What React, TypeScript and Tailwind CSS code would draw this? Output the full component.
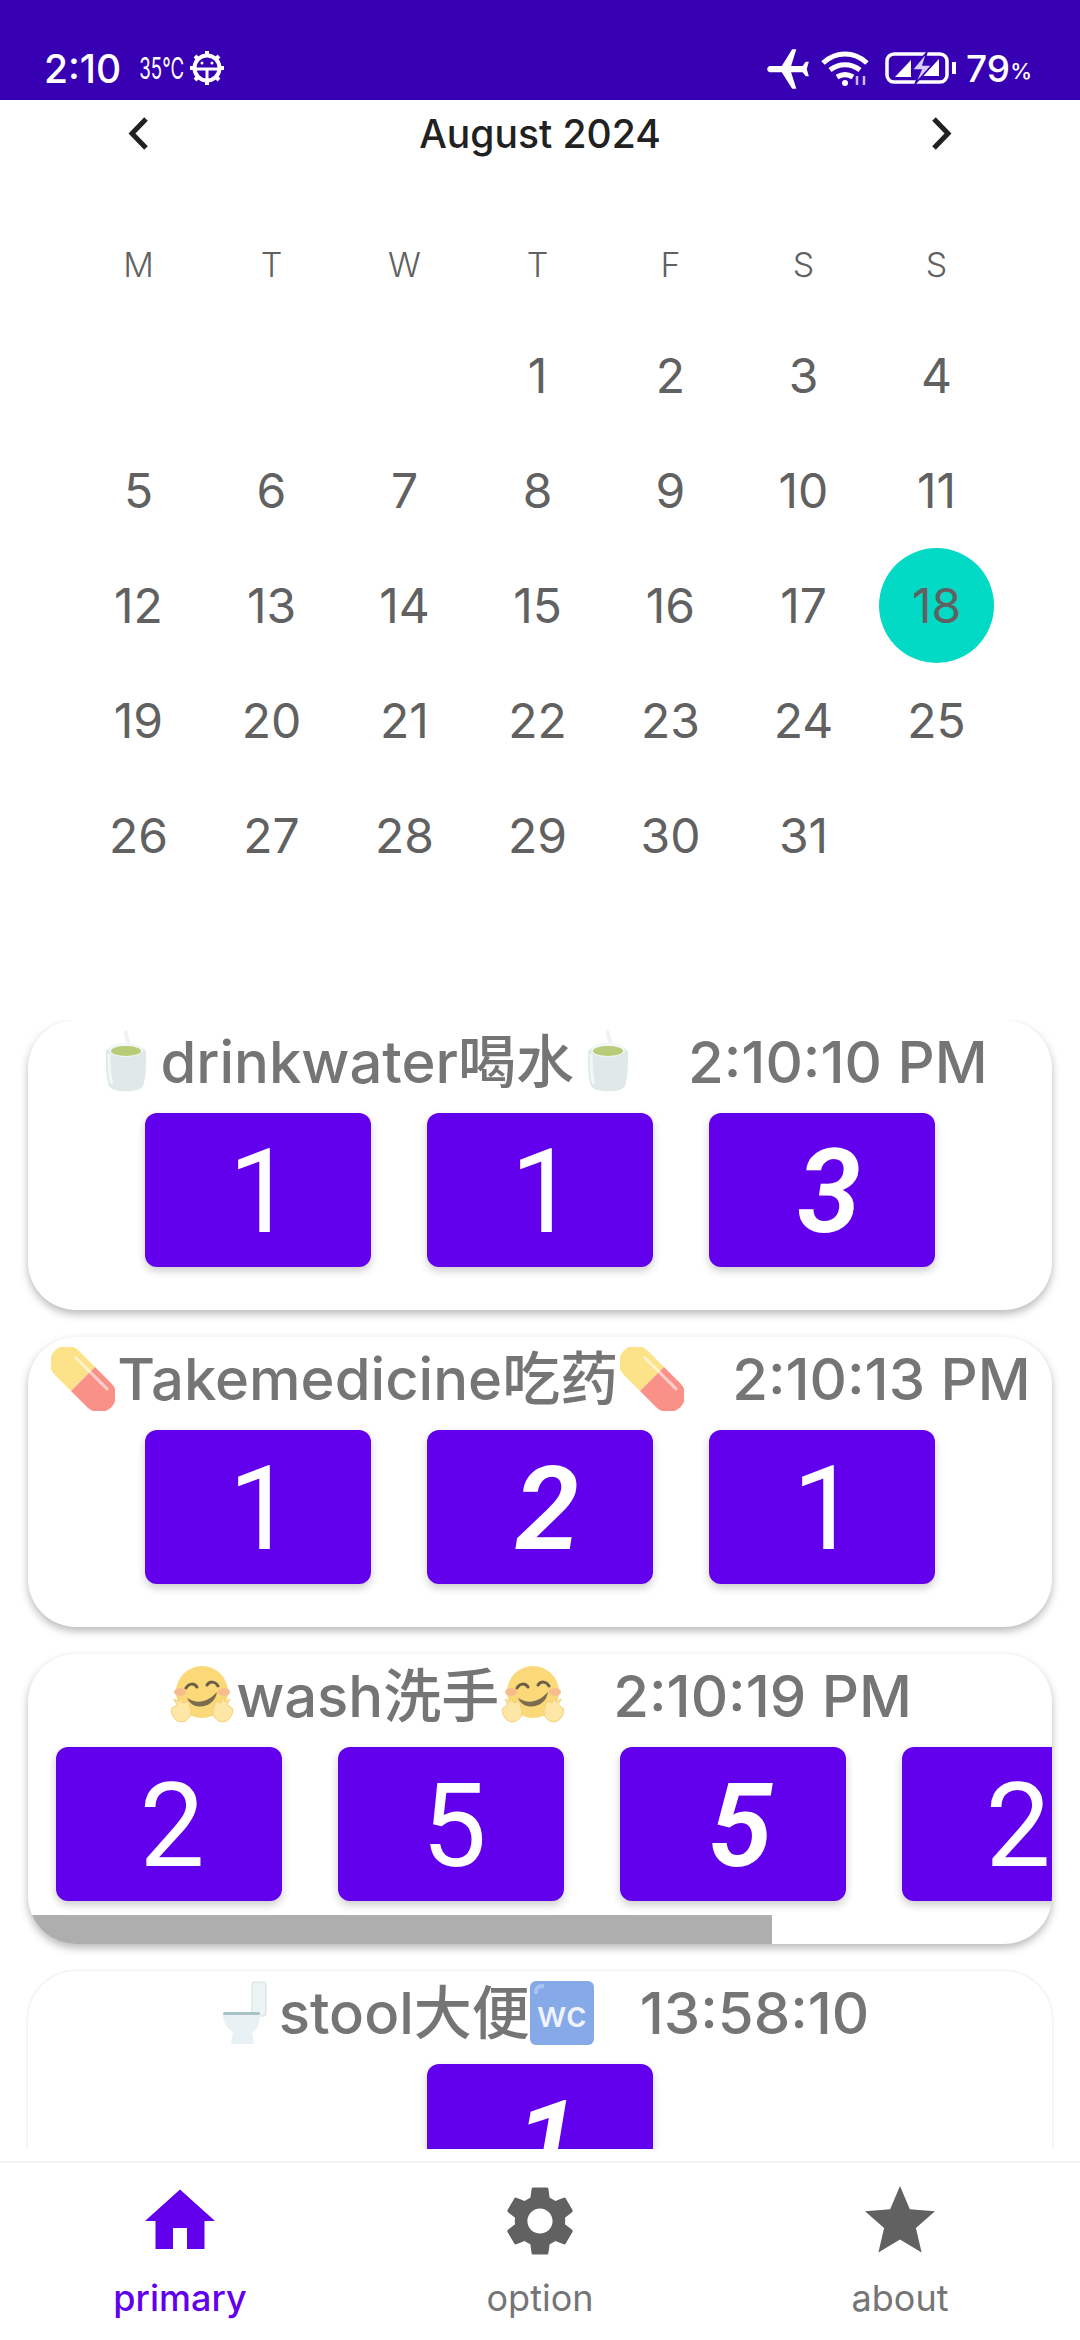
import { ReactNode } from "react";

const weeks = [
  ["", "", "", "1", "2", "3", "4"],
  ["5", "6", "7", "8", "9", "10", "11"],
  ["12", "13", "14", "15", "16", "17", "18"],
  ["19", "20", "21", "22", "23", "24", "25"],
  ["26", "27", "28", "29", "30", "31", ""],
];

function Emoji({ children }: { children: ReactNode }) {
  return <span className="flex w-[68px] shrink-0 items-center justify-center">{children}</span>;
}

function Glass() {
  return (
    <svg viewBox="0 0 42 64" className="h-[64px] w-[42px]">
      <path d="M22 1c-5 5 5 8 0 15" fill="none" stroke="#eff3f2" strokeWidth="4" />
      <path d="M1 22c0-9 40-9 40 0 0 14 0 26-3 34-2 7-31 7-34 0C1 48 1 36 1 22z" fill="#dfe9e9" />
      <path d="M4 24c0 12 0 22 3 30" fill="none" stroke="#f3f7f7" strokeWidth="3" />
      <ellipse cx="21" cy="20" rx="17" ry="7" fill="#f2f6f5" />
      <ellipse cx="21" cy="21" rx="15" ry="5" fill="#b8cc77" />
    </svg>
  );
}

function Pill() {
  return (
    <svg viewBox="0 0 64 64" className="h-[64px] w-[64px]">
      <g transform="rotate(45 32 32)">
        <path d="M32 15H9a17 17 0 0 0 0 34h23z" fill="#fce38a" />
        <path d="M32 15h23a17 17 0 0 1 0 34H32z" fill="#f99189" />
        <path d="M12 22h44" stroke="#ffffff" strokeOpacity="0.55" strokeWidth="3" strokeLinecap="round" />
      </g>
    </svg>
  );
}

function Hug() {
  return (
    <svg viewBox="0 0 64 60" className="h-[60px] w-[64px]">
      <circle cx="32" cy="26" r="26" fill="#fbd878" />
      <ellipse cx="10" cy="26" rx="6" ry="4" fill="#f8bc8c" />
      <ellipse cx="54" cy="26" rx="6" ry="4" fill="#f8bc8c" />
      <path d="M16 22c3-5 8-5 11-1M37 19c3-4 8-4 11 1" fill="none" stroke="#6d5f45" strokeWidth="3" strokeLinecap="round" />
      <path d="M17 32c10 6 20 5 30-6-2 16-24 20-30 6z" fill="#7b6b4f" />
      <path d="M2 42l5-3-3-6 5 3 1-5 3 6 5-2 3 9c1 9-8 15-15 10C3 51 0 46 2 42z" fill="#fde6a6" stroke="#f6cd74" strokeWidth="1" />
      <path d="M62 42l-5-3 3-6-5 3-1-5-3 6-5-2-3 9c-1 9 8 15 15 10 3-3 6-8 4-12z" fill="#fde6a6" stroke="#f6cd74" strokeWidth="1" />
    </svg>
  );
}

function Toilet() {
  return (
    <svg viewBox="0 0 46 64" className="h-[64px] w-[46px]">
      <rect x="30" y="1" width="14" height="34" rx="2" fill="#edf4f6" stroke="#d3e0e4" />
      <path d="M1 33h37c0 10-3 15-8 19l2 11H9l2-12C5 47 1 42 1 33z" fill="#e8f2f5" />
      <rect x="1" y="31" width="37" height="3" rx="1.500" fill="#a8c2c8" />
    </svg>
  );
}

function Wc() {
  return (
    <div className="relative flex h-[64px] w-[64px] shrink-0 items-center justify-center overflow-hidden rounded-[6px] bg-[#86a9e8] pt-[2px] text-[36px] font-medium leading-none text-[#eef3fd]">
      wc
      <span className="absolute top-[3px] left-[4px] h-[10px] w-[10px] rounded-tl-[8px] border-t-4 border-l-4 border-[#a9c3f0]" />
    </div>
  );
}

function Btn({ n, italic }: { n: string; italic?: boolean }) {
  return (
    <div
      className={`flex h-[154px] w-[226px] shrink-0 items-center justify-center rounded-[12px] bg-[#6200ee] pt-[4px] font-['Roboto',sans-serif] text-[116px] leading-none text-white shadow-[0_4px_8px_rgba(0,0,0,0.2)] ${italic ? "pl-[14px] font-semibold italic" : "pl-[6px]"}`}
    >
      {n}
    </div>
  );
}

function Card({
  title,
  time,
  children,
  scroll,
  faint,
}: {
  title: ReactNode;
  time: string;
  children: ReactNode;
  scroll?: boolean;
  faint?: boolean;
}) {
  return (
    <div
      className={`relative mb-[27px] h-[290px] shrink-0 overflow-hidden rounded-[48px] bg-white ${faint ? "shadow-[0_0_3px_rgba(0,0,0,0.15)]" : "shadow-[0_4px_8px_rgba(0,0,0,0.28)]"}`}
    >
      <div className="flex h-[93px] items-center justify-center pb-[10px] text-[58px] font-medium leading-none whitespace-nowrap text-[#757575]">
        {title}
        <span className="ml-[46px]">{time}</span>
      </div>
      <div className={`flex gap-[56px] ${scroll ? "pl-[28px]" : "justify-center"}`}>{children}</div>
      {scroll && <div className="absolute bottom-0 left-0 h-[29px] w-[744px] bg-[#aeaeae]" />}
    </div>
  );
}

export default function App() {
  return (
    <div className="flex h-[2340px] w-[1080px] flex-col overflow-hidden bg-white font-['Inter','Noto_Sans_CJK_SC',sans-serif]">
      <div className="flex h-[100px] shrink-0 items-center justify-between bg-[#3700b3] pt-[36px] pr-[48px] pl-[44px] text-white">
        <div className="flex items-center">
          <span className="text-[39px] font-medium leading-none">2:10</span>
          <span className="ml-[10px] w-[44px] scale-x-[0.62] text-[30px] leading-none whitespace-nowrap">35℃</span>
          <svg viewBox="0 0 36 36" className="ml-[14px] h-[36px] w-[36px]" fill="none" stroke="#fff">
            <circle cx="18" cy="18" r="12.500" strokeWidth="4" />
            <path d="M18 1v5M18 30v5M1 18h5M30 18h5M6 6l3 3M27 27l3 3M30 6l-3 3M9 27l-3 3" strokeWidth="4" />
            <path d="M6 19h24M18 19v11" strokeWidth="3" />
            <circle cx="13" cy="13" r="1.500" fill="#fff" stroke="none" />
            <circle cx="23" cy="13" r="1.500" fill="#fff" stroke="none" />
          </svg>
        </div>
        <div className="flex items-center">
          <svg viewBox="0 0 24 24" className="h-[50px] w-[50px]" fill="#fff">
            <path d="M21 16v-2l-8-5V3.500c0-.830-.670-1.500-1.500-1.500S10 2.670 10 3.500V9l-8 5v2l8-2.500V19l-2 1.500V22l3.500-1 3.500 1v-1.500L13 19v-5.500z" transform="rotate(-90 12 12)" />
          </svg>
          <svg viewBox="0 0 48 36" className="ml-[8px] h-[36px] w-[48px]" fill="none" stroke="#fff" strokeWidth="5">
            <path d="M2 13c13-12 31-12 44 0M9 20c9-7 21-7 30 0M16 27c5-3 11-3 16 0" />
            <circle cx="24" cy="33" r="3" fill="#fff" stroke="none" />
            <path d="M36 26v9M43 26v9" stroke="#c9b8ff" strokeWidth="2.500" />
          </svg>
          <svg viewBox="0 0 72 32" className="ml-[16px] h-[32px] w-[72px]" fill="none" stroke="#fff" strokeWidth="3.500">
            <rect x="2" y="2" width="60" height="28" rx="7" />
            <path d="M69 10v12" strokeWidth="4" />
            <path d="M10 25l16-17v17z" fill="#fff" stroke="none" />
            <path d="M54 7L38 24h16z" fill="#fff" stroke="none" />
            <path d="M42 0L27 18h9l-6 14 17-19h-9z" fill="#d8ccff" stroke="#3700b3" strokeWidth="1.500" />
          </svg>
          <span className="ml-[9px] text-[37px] font-medium leading-none">79</span>
          <span className="mt-[6px] text-[22px] font-medium leading-none">%</span>
        </div>
      </div>

      <div className="flex h-[920px] shrink-0 flex-col">
        <div className="flex h-[66px] items-center justify-between px-[127px]">
          <svg viewBox="0 0 22 33" className="h-[33px] w-[22px]" fill="none" stroke="#212121" strokeWidth="5">
            <path d="M19 2L5 16.500 19 31" />
          </svg>
          <span className="text-[39px] font-medium leading-none text-[#212121]">August 2024</span>
          <svg viewBox="0 0 22 33" className="h-[33px] w-[22px]" fill="none" stroke="#212121" strokeWidth="5">
            <path d="M3 2l14 14.500L3 31" />
          </svg>
        </div>
        <div className="mt-[82px] grid grid-cols-[repeat(7,133px)] pl-[72px] text-center text-[34px] font-light leading-none text-[#616161]">
          {["M", "T", "W", "T", "F", "S", "S"].map((d, i) => (
            <span key={i}>{d}</span>
          ))}
        </div>
        <div className="mt-[36px] grid grid-cols-[repeat(7,133px)] grid-rows-[repeat(5,115px)] pl-[72px] text-[48px] leading-none text-[#616161]">
          {weeks.flat().map((d, i) => (
            <div key={i} className="flex items-center justify-center">
              {d === "18" ? (
                <span className="flex h-[115px] w-[115px] items-center justify-center rounded-full bg-[#03dac5]">
                  {d}
                </span>
              ) : (
                d
              )}
            </div>
          ))}
        </div>
      </div>

      <div className="flex min-h-0 flex-1 flex-col overflow-hidden px-[28px]">
        <Card title={<><Emoji><Glass /></Emoji>drinkwater喝水<Emoji><Glass /></Emoji></>} time="2:10:10 PM">
          <Btn n="1" />
          <Btn n="1" />
          <Btn n="3" italic />
        </Card>
        <Card title={<><Emoji><Pill /></Emoji>Takemedicine吃药<Emoji><Pill /></Emoji></>} time="2:10:13 PM">
          <Btn n="1" />
          <Btn n="2" italic />
          <Btn n="1" />
        </Card>
        <Card title={<><Emoji><Hug /></Emoji>wash洗手<Emoji><Hug /></Emoji></>} time="2:10:19 PM" scroll>
          <Btn n="2" />
          <Btn n="5" />
          <Btn n="5" italic />
          <Btn n="2" />
        </Card>
        <Card title={<><Emoji><Toilet /></Emoji>stool大便<Wc /></>} time="13:58:10" faint>
          <Btn n="1" italic />
        </Card>
      </div>

      <div className="mt-[12px] flex h-[179px] shrink-0 border-t-2 border-[#f3f3f3] bg-white text-[36px] leading-none text-[#757575]">
        <div className="flex w-[360px] flex-col items-center pt-[16px] font-medium text-[#6200ee]">
          <svg viewBox="0 0 24 24" className="h-[84px] w-[84px]" fill="#6200ee">
            <path d="M10 20v-6h4v6h5v-8h3L12 3 2 12h3v8z" />
          </svg>
          <span className="mt-[17px]">primary</span>
        </div>
        <div className="flex w-[360px] flex-col items-center pt-[16px]">
          <svg viewBox="0 0 24 24" className="h-[84px] w-[84px]" fill="#616161">
            <path d="M19.140 12.940c.04-.3.060-.610.060-.940 0-.320-.020-.640-.070-.940l2.030-1.580c.180-.140.230-.410.120-.610l-1.920-3.320c-.120-.220-.370-.290-.590-.220l-2.390.960c-.500-.380-1.030-.700-1.620-.940l-.360-2.540c-.040-.240-.240-.410-.480-.410h-3.840c-.240 0-.430.170-.470.410l-.360 2.540c-.590.240-1.130.570-1.620.940l-2.390-.960c-.220-.080-.470 0-.590.220L2.740 8.870c-.120.210-.080.470.120.610l2.030 1.580c-.050.300-.090.630-.090.940s.020.640.070.940l-2.030 1.580c-.180.140-.230.410-.120.610l1.920 3.320c.120.220.370.290.590.220l2.390-.960c.500.380 1.030.700 1.620.940l.360 2.540c.050.240.240.410.480.410h3.840c.240 0 .440-.170.470-.410l.360-2.540c.590-.240 1.130-.560 1.620-.940l2.390.960c.220.080.470 0 .590-.220l1.920-3.320c.120-.220.070-.470-.120-.610l-2.010-1.580zM12 15.600c-1.980 0-3.600-1.620-3.600-3.600s1.620-3.600 3.600-3.600 3.600 1.620 3.600 3.600-1.620 3.600-3.600 3.600z" />
          </svg>
          <span className="mt-[17px]">option</span>
        </div>
        <div className="flex w-[360px] flex-col items-center pt-[16px]">
          <svg viewBox="0 0 24 24" className="h-[84px] w-[84px]" fill="#616161">
            <path d="M12 17.270L18.180 21l-1.640-7.030L22 9.240l-7.190-.610L12 2 9.190 8.630 2 9.240l5.460 4.730L5.820 21z" />
          </svg>
          <span className="mt-[17px]">about</span>
        </div>
      </div>
    </div>
  );
}
